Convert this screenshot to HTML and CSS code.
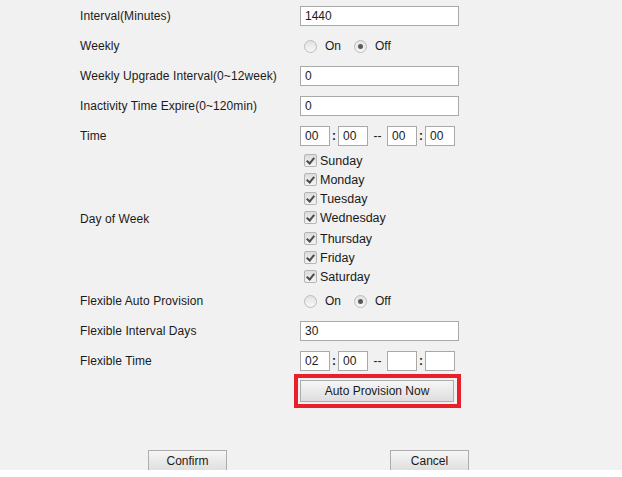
FILE: index.html
```html
<!DOCTYPE html>
<html lang="en">
<head>
  <meta charset="UTF-8">
  <title>Auto Provision</title>
  <link rel="stylesheet" href="styles.css">
</head>
<body>
  <div class="panel">
    <div class="form">
      <div class="row">
        <div class="label">Interval(Minutes)</div>
        <div class="value"><input class="text" type="text" value="1440"></div>
      </div>
      <div class="row">
        <div class="label">Weekly</div>
        <div class="value">
          <label class="radio"><span class="dot"></span>On</label>
          <label class="radio"><span class="dot on"></span>Off</label>
        </div>
      </div>
      <div class="row">
        <div class="label">Weekly Upgrade Interval(0~12week)</div>
        <div class="value"><input class="text" type="text" value="0"></div>
      </div>
      <div class="row">
        <div class="label">Inactivity Time Expire(0~120min)</div>
        <div class="value"><input class="text" type="text" value="0"></div>
      </div>
      <div class="row">
        <div class="label">Time</div>
        <div class="value time">
          <input class="small" type="text" value="00"><span class="sep">:</span><input class="small" type="text" value="00"><span class="dash">--</span><input class="small" type="text" value="00"><span class="sep">:</span><input class="small" type="text" value="00">
        </div>
      </div>
      <div class="row days-row">
        <div class="label">Day of Week</div>
        <div class="value days">
          <label class="check"><span class="box"></span>Sunday</label>
          <label class="check"><span class="box"></span>Monday</label>
          <label class="check"><span class="box"></span>Tuesday</label>
          <label class="check"><span class="box"></span>Wednesday</label>
          <label class="check"><span class="box"></span>Thursday</label>
          <label class="check"><span class="box"></span>Friday</label>
          <label class="check"><span class="box"></span>Saturday</label>
        </div>
      </div>
      <div class="row">
        <div class="label">Flexible Auto Provision</div>
        <div class="value">
          <label class="radio"><span class="dot"></span>On</label>
          <label class="radio"><span class="dot on"></span>Off</label>
        </div>
      </div>
      <div class="row">
        <div class="label">Flexible Interval Days</div>
        <div class="value"><input class="text" type="text" value="30"></div>
      </div>
      <div class="row">
        <div class="label">Flexible Time</div>
        <div class="value time">
          <input class="small" type="text" value="02"><span class="sep">:</span><input class="small" type="text" value="00"><span class="dash">--</span><input class="small" type="text" value=""><span class="sep">:</span><input class="small" type="text" value="">
        </div>
      </div>
      <div class="row action-row">
        <div class="label"></div>
        <div class="value">
          <div class="highlight"><button class="btn wide">Auto Provision Now</button></div>
        </div>
      </div>
    </div>
    <div class="footer">
      <button class="btn foot">Confirm</button>
      <button class="btn foot">Cancel</button>
    </div>
  </div>
  <div class="bottom"></div>
</body>
</html>
```

FILE: styles.css
```css
body {
  margin: 0;
  background: #fff;
  font-family: "Liberation Sans", Arial, sans-serif;
  font-size: 12px;
  color: #1a1a1a;
}
.panel {
  background: #f1f1f1;
  height: 470px;
  overflow: hidden;
  box-sizing: border-box;
  padding-top: 1px;
}
.form {
  padding-left: 80px;
}
.row {
  display: flex;
  align-items: center;
  height: 30px;
}
.label {
  width: 220px;
  flex-shrink: 0;
  letter-spacing: 0.08px;
}
.value {
  display: flex;
  align-items: center;
}
input {
  font-family: inherit;
  font-size: 12px;
  color: #1a1a1a;
  background: #fff;
  border: 1px solid #a9a9a9;
  box-sizing: border-box;
  margin: 0;
  outline: none;
}
.text {
  width: 159px;
  height: 20px;
  padding: 0 4px;
}
.small {
  width: 30px;
  height: 20px;
  padding: 0 4px;
}
.sep {
  width: 8px;
  text-align: center;
  font-weight: bold;
}
.dash {
  width: 19px;
  text-align: center;
}
.radio {
  display: flex;
  align-items: center;
  margin-right: 9px;
}
.dot {
  width: 11px;
  height: 11px;
  border: 1px solid #bcbcbc;
  border-radius: 50%;
  background: linear-gradient(#e2e2e2, #f7f7f7);
  margin: 0 8px 0 4px;
  position: relative;
}
.dot.on::after {
  content: "";
  position: absolute;
  left: 3px;
  top: 3px;
  width: 5px;
  height: 5px;
  border-radius: 50%;
  background: #5a5a5a;
}
.days-row {
  height: 135px;
}
.days {
  flex-direction: column;
  align-items: flex-start;
}
.check {
  display: flex;
  align-items: center;
  height: 19px;
  font-size: 12.5px;
}
.check:nth-child(5) {
  margin-top: 2px;
}
.box {
  width: 11px;
  height: 11px;
  border: 1px solid #b5b5b5;
  border-radius: 2px;
  background: linear-gradient(#dcdcdc, #f4f4f4);
  margin: 0 3px 0 4px;
  position: relative;
}
.box::after {
  content: "";
  position: absolute;
  left: 3px;
  top: 1px;
  width: 3px;
  height: 6px;
  border: solid #4a4a4a;
  border-width: 0 2px 2px 0;
  transform: rotate(40deg);
}
.action-row {
  height: 34px;
  align-items: flex-start;
}
.highlight {
  margin: -2px 0 0 -6px;
  border: 4px solid #e8202a;
  padding: 2px 3px 2px 2px;
}
.btn {
  font-family: inherit;
  font-size: 12px;
  color: #1a1a1a;
  border: 1px solid #adadad;
  background: linear-gradient(#f6f6f6, #dedede);
  padding: 0;
  margin: 0;
}
.wide {
  display: block;
  width: 154px;
  height: 22px;
}
.footer {
  display: flex;
  gap: 163px;
  padding: 40px 0 0 148px;
}
.foot {
  width: 79px;
  height: 22px;
}
.bottom {
  height: 7px;
}
```
